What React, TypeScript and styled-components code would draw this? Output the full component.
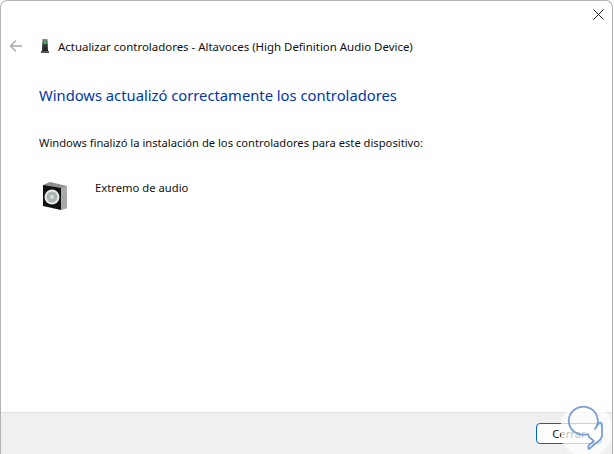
import React from "react";
import styled, { createGlobalStyle } from "styled-components";

const Global = createGlobalStyle`
  html, body { margin: 0; padding: 0; background: #fff; }
  body { width: 614px; height: 454px; overflow: hidden; font-family: "Noto Sans", "Open Sans", sans-serif; }
`;
const Win = styled.div`
  box-sizing: border-box; width: 613px; height: 454px;
  border: 1px solid #b4b4b4; border-bottom: none; border-radius: 7px 7px 0 0;
  background: #fff; display: flex; flex-direction: column; position: relative; overflow: hidden;
`;
const CloseBtn = styled.div`
  position: absolute; top: 6px; right: 7px; width: 14px; height: 14px;
  display: flex; align-items: center; justify-content: center;
`;
const Header = styled.div`
  display: flex; align-items: center; height: 20px; margin-top: 35px; padding-left: 8px;
`;
const BackIcon = styled.svg`width: 14px; height: 14px; margin-right: 15px; flex: none;`;
const DeviceIcon = styled.svg`width: 14px; height: 18px; margin-right: 6px; flex: none;`;
const HeaderTitle = styled.div`font-size: 11.45px; color: #111; white-space: nowrap;`;
const Content = styled.div`flex: 1; padding: 28px 0 0 38px; display: flex; flex-direction: column;`;
const Heading = styled.div`font-size: 14.75px; line-height: 22px; color: #0037a8; white-space: nowrap;`;
const Info = styled.div`font-size: 11.2px; line-height: 16px; color: #111; margin-top: 29px; white-space: nowrap;`;
const DeviceRow = styled.div`display: flex; align-items: flex-start; margin-top: 29px; margin-left: 3px; gap: 27px;`;
const SpeakerIcon = styled.svg`width: 26px; height: 30px; flex: none; margin-top: 1px;`;
const DeviceName = styled.div`font-size: 11.25px; line-height: 16px; color: #111;`;
const Footer = styled.div`
  height: 42px; box-sizing: border-box; background: #f0f0f0; border-top: 1px solid #dfdfdf;
  display: flex; align-items: flex-start; justify-content: flex-end; padding: 10px 10px 0 0;
`;
const CloseButton = styled.div`
  box-sizing: border-box; width: 66px; height: 21px; background: #fdfdfd; border: 1.5px solid #0067c0; border-radius: 4px;
  font-size: 11.25px; color: #111; display: flex; align-items: center; justify-content: center;
`;
const Watermark = styled.svg`position: absolute; left: 560px; top: 398px; width: 52px; height: 55px;`;

export default function App() {
  return (
    <>
      <Global />
      <Win>
        <CloseBtn>
          <svg width="11" height="11" viewBox="0 0 11 11"><path d="M.5.5l10 10M10.5.5l-10 10" stroke="#222" strokeWidth="1" fill="none" /></svg>
        </CloseBtn>
        <Header>
          <BackIcon viewBox="0 0 14 14"><path d="M13 7H1.5M7 1.5L1.5 7 7 12.5" stroke="#a8a8a8" strokeWidth="1.3" fill="none" /></BackIcon>
          <DeviceIcon viewBox="0 0 14 18">
            <defs>
              <linearGradient id="deviceBody" x1="0" y1="0" x2="0" y2="1">
                <stop offset="0" stopColor="#8c8c8c" />
                <stop offset="0.45" stopColor="#3a3a3a" />
                <stop offset="1" stopColor="#1f1f1f" />
              </linearGradient>
            </defs>
            <path d="M4.5 2h5l.5 12H4z" fill="url(#deviceBody)" />
            <path d="M3 14h8v2H3z" fill="#555" />
            <rect x="6" y="4.5" width="2.5" height="2.5" fill="#24d64a" />
          </DeviceIcon>
          <HeaderTitle>Actualizar controladores - Altavoces (High Definition Audio Device)</HeaderTitle>
        </Header>
        <Content>
          <Heading>Windows actualizó correctamente los controladores</Heading>
          <Info>Windows finalizó la instalación de los controladores para este dispositivo:</Info>
          <DeviceRow>
            <SpeakerIcon viewBox="0 0 26 30">
              <path d="M1 4l7-3 17 4v22l-6 2z" fill="#8f8f8f" />
              <path d="M1 4l18 3v22L1 25z" fill="#111" />
              <path d="M19 7l6-2v22l-6 2z" fill="#a9a9a9" />
              <circle cx="10" cy="16" r="7.5" fill="#e6ebea" />
              <circle cx="10" cy="16" r="5.5" fill="#aeb6b4" />
              <circle cx="10" cy="16" r="2" fill="#d8dddc" />
            </SpeakerIcon>
            <DeviceName>Extremo de audio</DeviceName>
          </DeviceRow>
        </Content>
        <Footer><CloseButton>Cerrar</CloseButton></Footer>
        <Watermark viewBox="561 399 52 55">
          <circle cx="586" cy="430" r="27" fill="#fff" fillOpacity="0.72" />
          <path d="M588 434A14.5 14 0 1 1 595 429L599 423Q602 422 602 425L602 436Q601 440 596 443L589 449Q587 447 590 444L594 441L589 437Z" fill="none" stroke="#7aa0d2" strokeWidth="1.8" strokeLinejoin="round" />
        </Watermark>
      </Win>
    </>
  );
}
